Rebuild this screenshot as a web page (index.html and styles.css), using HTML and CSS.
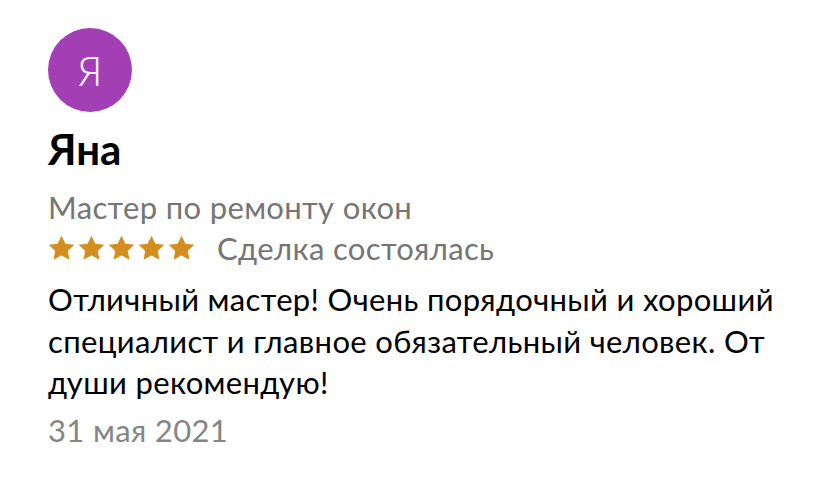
FILE: index.html
```html
<!DOCTYPE html>
<html>

<head>
    <title>Отзыв</title>
    <link rel="stylesheet" href="styles.css">
</head>

<body>
    <div class="review">
        <div class="avatar">Я</div>
        <div class="name">Яна</div>
        <div class="service">Мастер по ремонту окон</div>
        <div class="rating">
            <div class="stars">
                <svg viewBox="0 0 24 24"><path d="M12 .6l3.5 7.1 7.9 1-5.8 5.5 1.5 7.9L12 18.3l-7.1 3.8 1.5-7.9L.6 8.7l7.9-1z"/></svg>
                <svg viewBox="0 0 24 24"><path d="M12 .6l3.5 7.1 7.9 1-5.8 5.5 1.5 7.9L12 18.3l-7.1 3.8 1.5-7.9L.6 8.7l7.9-1z"/></svg>
                <svg viewBox="0 0 24 24"><path d="M12 .6l3.5 7.1 7.9 1-5.8 5.5 1.5 7.9L12 18.3l-7.1 3.8 1.5-7.9L.6 8.7l7.9-1z"/></svg>
                <svg viewBox="0 0 24 24"><path d="M12 .6l3.5 7.1 7.9 1-5.8 5.5 1.5 7.9L12 18.3l-7.1 3.8 1.5-7.9L.6 8.7l7.9-1z"/></svg>
                <svg viewBox="0 0 24 24"><path d="M12 .6l3.5 7.1 7.9 1-5.8 5.5 1.5 7.9L12 18.3l-7.1 3.8 1.5-7.9L.6 8.7l7.9-1z"/></svg>
            </div>
            <span class="deal">Сделка состоялась</span>
        </div>
        <p class="text">Отличный мастер! Очень порядочный и хороший специалист и главное обязательный человек. От души рекомендую!</p>
        <div class="date">31 мая 2021</div>
    </div>
</body>

</html>
```

FILE: styles.css
```css
html,
body {
    margin: 0;
    padding: 0;
    background: #fff;
}

body {
    font-family: Lato, "Liberation Sans", sans-serif;
    color: #000;
}

.review {
    padding: 28px 48px 0 48px;
    width: 740px;
}

.avatar {
    width: 84px;
    height: 84px;
    border-radius: 50%;
    background-color: #a33fb5;
    color: rgba(255, 255, 255, 0.92);
    font-family: "Noto Sans", sans-serif;
    font-weight: 300;
    font-size: 40px;
    display: flex;
    align-items: center;
    justify-content: center;
}

.name {
    font-size: 42px;
    font-weight: 700;
    line-height: 50px;
    margin-top: 12px;
}

.service,
.deal,
.text,
.date {
    font-size: 31px;
    letter-spacing: 0.35px;
}

.service {
    color: #757575;
    line-height: 40px;
    margin-top: 13px;
}

.rating {
    display: flex;
    align-items: center;
    gap: 22px;
    height: 42px;
}

.stars {
    display: flex;
    gap: 3px;
}

.stars svg {
    width: 27px;
    height: 27px;
    fill: #d38e1f;
}

.deal {
    color: #757575;
}

.text {
    margin: 10px 0 0 0;
    line-height: 41.5px;
}

.date {
    color: #858585;
    line-height: 40px;
    margin-top: 6px;
}
```
